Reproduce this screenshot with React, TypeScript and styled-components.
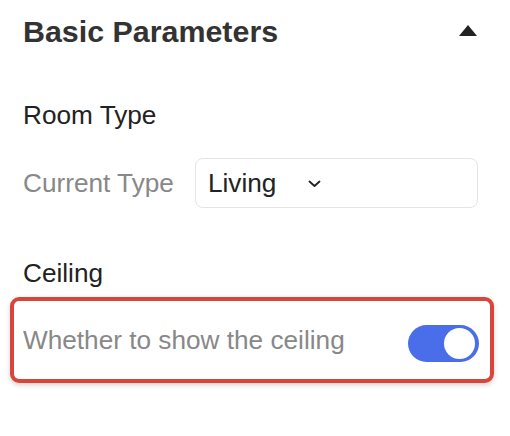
import styled, { createGlobalStyle } from "styled-components";
import { useState } from "react";

const GlobalStyle = createGlobalStyle`
  html, body {
    margin: 0;
    padding: 0;
    background: #ffffff;
  }
  body {
    font-family: "Liberation Sans", Arial, Helvetica, sans-serif;
    -webkit-font-smoothing: antialiased;
  }
`;

function App() {
  const [showCeiling, setShowCeiling] = useState(true);
  const [collapsed, setCollapsed] = useState(false);

  return (
    <>
      <GlobalStyle />
      <Panel>
        <Header>
          <Title>Basic Parameters</Title>
          <CollapseButton
            aria-label='collapse'
            onClick={() => setCollapsed(!collapsed)}>
            <svg width='18' height='12' viewBox='0 0 18 12'>
              <path d={collapsed ? "M0 0 L18 0 L9 11 Z" : "M9 0 L18 11 L0 11 Z"} fill='#222' />
            </svg>
          </CollapseButton>
        </Header>

        {!collapsed && (
          <>
            <SectionLabel>Room Type</SectionLabel>
            <FieldRow>
              <FieldLabel>Current Type</FieldLabel>
              <SelectBox>
                <span>Living</span>
                <svg width='13' height='8' viewBox='0 0 13 8'>
                  <path
                    d='M1.5 1.5 L6.5 6 L11.5 1.5'
                    fill='none'
                    stroke='#222'
                    strokeWidth='1.8'
                    strokeLinecap='round'
                    strokeLinejoin='round'
                  />
                </svg>
              </SelectBox>
            </FieldRow>

            <SectionLabel $gap={50}>Ceiling</SectionLabel>
            <Highlight>
              <FieldLabel>Whether to show the ceiling</FieldLabel>
              <Toggle $on={showCeiling} onClick={() => setShowCeiling(!showCeiling)}>
                <Knob $on={showCeiling} />
              </Toggle>
            </Highlight>
          </>
        )}
      </Panel>
    </>
  );
}

const Panel = styled.div`
  width: 510px;
  height: 436px;
  box-sizing: border-box;
  padding: 0 32px 0 23px;
  display: flex;
  flex-direction: column;
`;

const Header = styled.div`
  height: 62px;
  display: flex;
  align-items: center;
  justify-content: space-between;
`;

const Title = styled.h2`
  margin: 0;
  font-size: 30.4px;
  font-weight: 700;
  color: #333333;
`;

const CollapseButton = styled.button`
  border: none;
  background: none;
  padding: 0;
  margin-right: 1px;
  display: flex;
  cursor: pointer;
`;

const SectionLabel = styled.div<{ $gap?: number }>`
  margin-top: ${(p) => p.$gap ?? 38}px;
  line-height: 30px;
  font-size: 26.2px;
  color: #222222;
`;

const FieldRow = styled.div`
  margin-top: 28px;
  display: flex;
  align-items: center;
  gap: 21px;
`;

const FieldLabel = styled.span`
  font-size: 26.2px;
  color: #888888;
  white-space: nowrap;
`;

const SelectBox = styled.div`
  flex: 1;
  height: 50px;
  box-sizing: border-box;
  border: 1.5px solid #e4e4e4;
  border-radius: 8px;
  padding-left: 12px;
  display: flex;
  align-items: center;
  gap: 32px;
  font-size: 26.2px;
  color: #222222;

  svg {
    margin-top: 1px;
  }
`;

const Highlight = styled.div`
  margin: 9px -16px 0 -13px;
  height: 86px;
  box-sizing: border-box;
  border: 4px solid #d8463a;
  border-radius: 9px;
  box-shadow: 0 2px 5px rgba(0, 0, 0, 0.18);
  padding: 0 11px 0 9px;
  display: flex;
  align-items: center;
  justify-content: space-between;
`;

const Toggle = styled.button<{ $on: boolean }>`
  width: 71px;
  height: 37px;
  margin-top: 7px;
  border: none;
  border-radius: 19px;
  padding: 3px 4px;
  box-sizing: border-box;
  background: ${(p) => (p.$on ? "#4a6ee9" : "#cccccc")};
  display: flex;
  justify-content: ${(p) => (p.$on ? "flex-end" : "flex-start")};
  align-items: center;
  cursor: pointer;
`;

const Knob = styled.span<{ $on: boolean }>`
  width: 31px;
  height: 31px;
  border-radius: 50%;
  background: #ffffff;
`;

export default App;
